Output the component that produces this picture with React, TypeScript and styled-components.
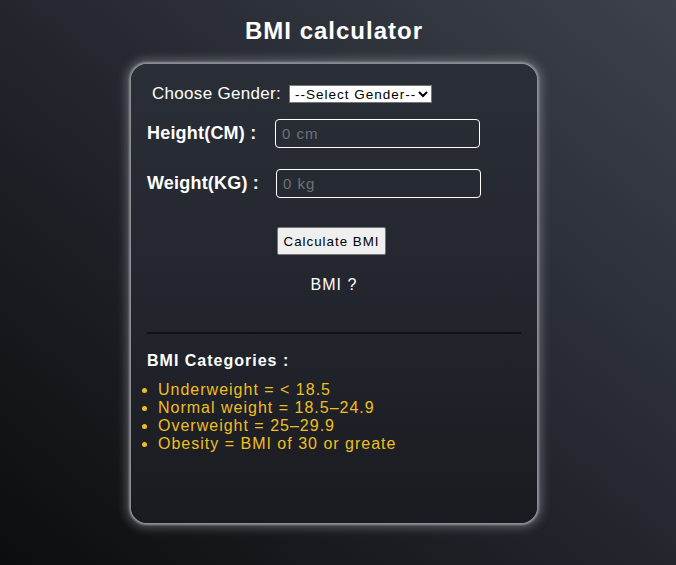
import React from "react";
import styled, { createGlobalStyle } from "styled-components";

const Global = createGlobalStyle`
  html, body { margin: 0; padding: 0; }
  body {
    font-family: "Liberation Sans", Arial, sans-serif;
    background: #1c1f25;
  }
`;

const Page = styled.div`
  min-height: 565px;
  box-sizing: border-box;
  background: linear-gradient(to top right, #0c0d10 0%, #23262d 50%, #3c414b 100%);
  display: flex;
  flex-direction: column;
  align-items: center;
  padding: 17px 8px 0 0;
  color: #fff;
`;

const Title = styled.h1`
  margin: 0 0 19px;
  font-size: 24px;
  line-height: 28px;
  font-weight: 700;
  letter-spacing: 1px;
  color: #fff;
`;

const Card = styled.div`
  width: 406px;
  height: 459px;
  box-sizing: border-box;
  padding: 16px;
  border-radius: 16px;
  background: linear-gradient(to bottom, #2a2e37 0%, #22252c 55%, #191b20 100%);
  box-shadow: 0 0 2px 2px #8d9096, 0 0 10px 5px rgba(190, 192, 198, 0.35);
  display: flex;
  flex-direction: column;
`;

const GenderRow = styled.div`
  display: flex;
  align-items: center;
  gap: 8px;
  padding-left: 5px;
  height: 28px;
`;

const GenderLabel = styled.label`
  font-size: 17px;
  letter-spacing: 0.3px;
  color: #fff;
`;

const Select = styled.select`
  font-family: "Liberation Sans", Arial, sans-serif;
  font-size: 13.5px;
  letter-spacing: 1px;
  height: 18px;
  width: 143px;
  padding: 0 0 0 1px;
  border: 1px solid #767676;
  border-radius: 0;
  background: #fff;
  color: #000;
`;

const FieldRow = styled.div<{ $top: number }>`
  display: flex;
  align-items: center;
  gap: 17px;
  margin-top: ${(p) => p.$top}px;
`;

const FieldLabel = styled.label<{ $w: number }>`
  width: ${(p) => p.$w}px;
  font-size: 18px;
  font-weight: 700;
  letter-spacing: 0.2px;
  color: #fff;
  white-space: nowrap;
`;

const Input = styled.input`
  width: 205px;
  height: 29px;
  box-sizing: border-box;
  border: 1px solid #fff;
  border-radius: 4px;
  background: transparent;
  padding: 0 6px;
  font-family: "Liberation Sans", Arial, sans-serif;
  font-size: 15px;
  letter-spacing: 1px;
  color: #fff;
  outline: none;
  &::placeholder { color: #6f7278; }
`;

const ButtonWrap = styled.div`
  display: flex;
  justify-content: center;
  margin-top: 29px;
  padding-right: 5px;
`;

const Button = styled.button`
  font-family: "Liberation Sans", Arial, sans-serif;
  font-size: 13.33px;
  letter-spacing: 1px;
  height: 28px;
  box-sizing: border-box;
  padding: 0 6px;
  background: #efefef;
  color: #000;
  border: 1px solid #767676;
  border-radius: 2px;
`;

const Result = styled.div`
  margin-top: 21px;
  text-align: center;
  font-size: 16px;
  letter-spacing: 1px;
  line-height: 18px;
  color: #fff;
`;

const Divider = styled.hr`
  margin: 38px 0 0;
  border: none;
  height: 2px;
  background: #111216;
`;

const CatTitle = styled.div`
  margin-top: 18px;
  font-size: 16px;
  font-weight: 700;
  letter-spacing: 1px;
  line-height: 18px;
  color: #fff;
`;

const List = styled.ul`
  margin: 11px 0 0;
  padding-left: 11px;
  list-style: disc;
  color: #efbf22;
`;

const Item = styled.li`
  font-size: 16px;
  letter-spacing: 1px;
  line-height: 18px;
`;

export default function App() {
  return (
    <>
      <Global />
      <Page>
        <Title>BMI calculator</Title>
        <Card>
          <GenderRow>
            <GenderLabel>Choose Gender:</GenderLabel>
            <Select defaultValue="">
              <option value="">--Select Gender--</option>
              <option value="m">Male</option>
              <option value="f">Female</option>
            </Select>
          </GenderRow>
          <FieldRow $top={11}>
            <FieldLabel $w={111}>Height(CM) :</FieldLabel>
            <Input placeholder="0 cm" />
          </FieldRow>
          <FieldRow $top={21}>
            <FieldLabel $w={112}>Weight(KG) :</FieldLabel>
            <Input placeholder="0 kg" />
          </FieldRow>
          <ButtonWrap>
            <Button>Calculate BMI</Button>
          </ButtonWrap>
          <Result>BMI ?</Result>
          <Divider />
          <CatTitle>BMI Categories :</CatTitle>
          <List>
            <Item>Underweight = &lt; 18.5</Item>
            <Item>Normal weight = 18.5–24.9</Item>
            <Item>Overweight = 25–29.9</Item>
            <Item>Obesity = BMI of 30 or greate</Item>
          </List>
        </Card>
      </Page>
    </>
  );
}
